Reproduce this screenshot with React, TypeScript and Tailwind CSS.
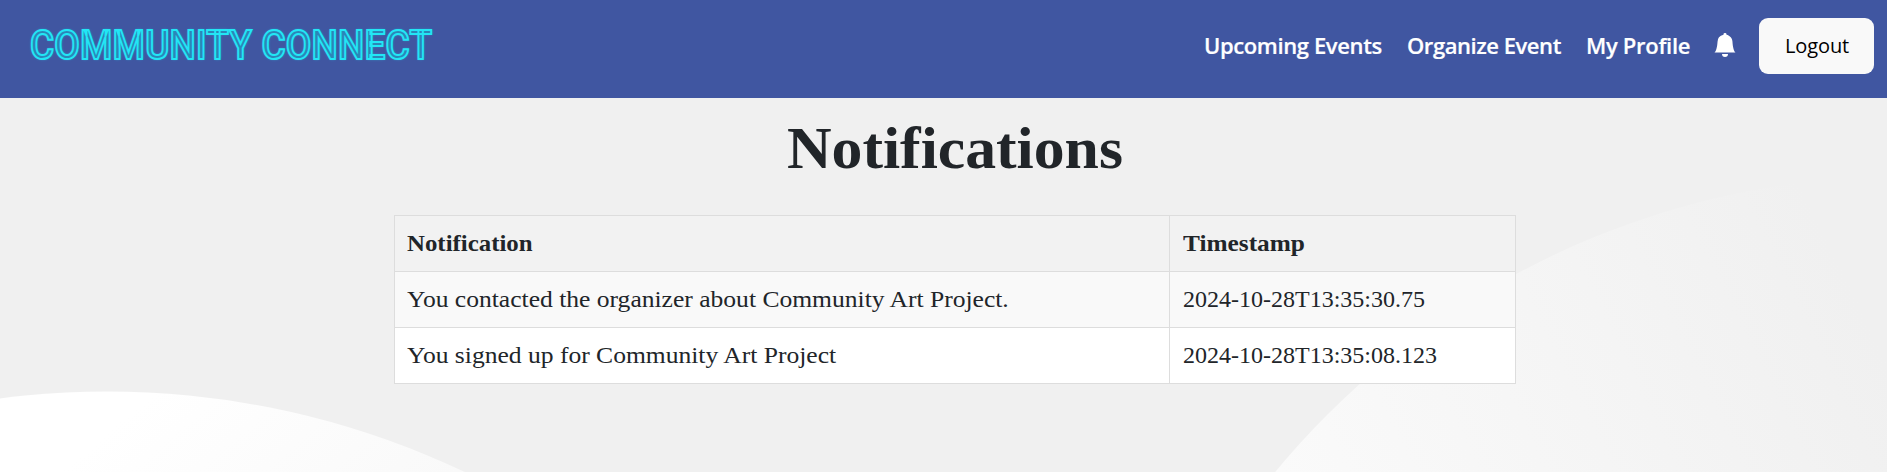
import { BsBellFill } from "react-icons/bs";

const rows = [
  {
    text: "You contacted the organizer about Community Art Project.",
    time: "2024-10-28T13:35:30.75",
  },
  {
    text: "You signed up for Community Art Project",
    time: "2024-10-28T13:35:08.123",
  },
];

function Backdrop() {
  return (
    <svg
      className="absolute inset-0 -z-10"
      width="1887"
      height="472"
      viewBox="0 0 1887 472"
      aria-hidden="true"
    >
      <defs>
        <linearGradient id="left" gradientUnits="userSpaceOnUse" x1="-273" y1="754" x2="140" y2="1243">
          <stop offset="0" stopColor="#ffffff" />
          <stop offset="1" stopColor="#f0f0f0" />
        </linearGradient>
        <linearGradient id="right" gradientUnits="userSpaceOnUse" x1="1337" y1="1268" x2="2138" y2="879">
          <stop offset="0" stopColor="#ffffff" />
          <stop offset="1" stopColor="#f0f0f0" />
        </linearGradient>
      </defs>
      <circle cx="1904" cy="992" r="816" fill="url(#right)" />
      <circle cx="107" cy="1227.5" r="836" fill="url(#left)" />
    </svg>
  );
}

function NavBar() {
  return (
    <header className="flex h-[98px] items-start justify-between bg-[#4056a1] pl-[30px] pr-[13px]">
      <div className="mt-5 origin-left scale-x-[0.9] whitespace-nowrap font-['Roboto'] text-[41px] font-medium leading-[50px] tracking-[0.3px] text-[#2b86b8] [-webkit-text-stroke:2px_#22e6f5] [text-shadow:0_0_3px_#22c8e8]">
        COMMUNITY CONNECT
      </div>
      <nav className="mt-[18px] flex h-14 items-center whitespace-nowrap font-['Open_Sans'] text-[22px] font-semibold text-white">
        <a className="mr-[25px] w-[178px] -translate-y-px tracking-[-0.38px] [-webkit-text-stroke:0.2px_white]">
          Upcoming Events
        </a>
        <a className="mr-[25px] w-[154px] -translate-y-px tracking-[-0.45px] [-webkit-text-stroke:0.2px_white]">
          Organize Event
        </a>
        <a className="mr-[22px] w-[105px] -translate-y-px tracking-[-0.3px] [-webkit-text-stroke:0.2px_white]">
          My Profile
        </a>
        <BsBellFill className="mr-[22px] size-6 -translate-y-px" />
        <button className="h-14 w-[115px] rounded-[9px] bg-[#f9f9f9] pb-px pl-px text-xl font-normal tracking-[-0.1px] text-black">
          Logout
        </button>
      </nav>
    </header>
  );
}

export default function App() {
  return (
    <div className="relative isolate h-[472px] overflow-hidden bg-[#f0f0f0] font-['Liberation_Serif'] text-[#212529]">
      <Backdrop />
      <NavBar />
      <main>
        <h1 className="ml-[787px] mt-3.5 h-[103px] origin-left scale-x-[1.046] whitespace-nowrap text-[59px] font-bold leading-[72px]">
          Notifications
        </h1>
        <table className="ml-[394px] w-[1122px] table-fixed border-collapse bg-white text-left text-2xl">
          <colgroup>
            <col className="w-[775px]" />
            <col className="w-[346px]" />
          </colgroup>
          <thead>
            <tr className="h-14 bg-[#f2f2f2]">
              <th className="border border-[#dddddd] px-3 pb-0.5 pt-0">
                <span className="inline-block origin-left scale-x-[1.035]">Notification</span>
              </th>
              <th className="border border-[#dddddd] px-3 pb-0.5 pl-[13px] pt-0">
                <span className="inline-block origin-left scale-x-[1.055]">Timestamp</span>
              </th>
            </tr>
          </thead>
          <tbody>
            {rows.map((row) => (
              <tr key={row.time} className="h-14 odd:bg-[#f9f9f9]">
                <td className="border border-[#dddddd] px-3 pb-0.5 pt-0">
                  <span className="inline-block origin-left scale-x-[1.065]">{row.text}</span>
                </td>
                <td className="border border-[#dddddd] px-3 pb-0.5 pl-[13px] pt-0">{row.time}</td>
              </tr>
            ))}
          </tbody>
        </table>
      </main>
    </div>
  );
}
